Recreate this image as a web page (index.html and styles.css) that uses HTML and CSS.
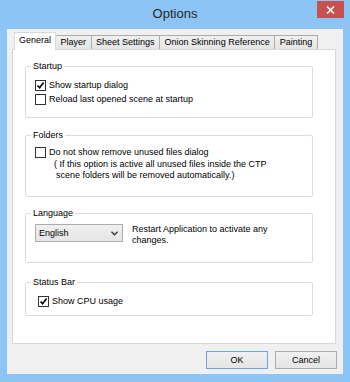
FILE: index.html
```html
<!DOCTYPE html>
<html lang="en">
<head>
    <meta charset="UTF-8">
    <title>Options</title>
    <link rel="stylesheet" href="styles.css">
</head>
<body>
    <div class="window">
        <div class="titlebar">
            <span class="title">Options</span>
            <span class="close">
                <svg width="9" height="8" viewBox="0 0 9 8"><path d="M1 0.5 L8 7.5 M8 0.5 L1 7.5" stroke="#fff" stroke-width="1.6" fill="none"/></svg>
            </span>
        </div>

        <div class="client">
            <div class="tabs">
                <div class="tab active">General</div>
                <div class="tab">Player</div>
                <div class="tab">Sheet Settings</div>
                <div class="tab">Onion Skinning Reference</div>
                <div class="tab">Painting</div>
            </div>

            <div class="panel">
                <fieldset class="group startup">
                    <legend>Startup</legend>
                    <div class="check-row">
                        <span class="box"><svg width="9" height="9" viewBox="0 0 9 9"><path d="M1.5 4.5 L3.6 6.8 L7.6 1.6" stroke="#000" stroke-width="1.6" fill="none"/></svg></span>
                        Show startup dialog
                    </div>
                    <div class="check-row">
                        <span class="box"></span>
                        Reload last opened scene at startup
                    </div>
                </fieldset>

                <fieldset class="group folders">
                    <legend>Folders</legend>
                    <div class="check-row">
                        <span class="box"></span>
                        Do not show remove unused files dialog
                    </div>
                    <div class="note">( If this option is active all unused files inside the CTP</div>
                    <div class="note second">scene folders will be removed automatically.)</div>
                </fieldset>

                <fieldset class="group language">
                    <legend>Language</legend>
                    <div class="lang-row">
                        <div class="select">
                            <span>English</span>
                            <svg width="7" height="5" viewBox="0 0 7 5"><path d="M0.5 0.8 L3.5 3.8 L6.5 0.8" stroke="#333" stroke-width="1.3" fill="none"/></svg>
                        </div>
                        <div class="lang-hint">Restart Application to activate any<br>changes.</div>
                    </div>
                </fieldset>

                <fieldset class="group status">
                    <legend>Status Bar</legend>
                    <div class="check-row">
                        <span class="box"><svg width="9" height="9" viewBox="0 0 9 9"><path d="M1.5 4.5 L3.6 6.8 L7.6 1.6" stroke="#000" stroke-width="1.6" fill="none"/></svg></span>
                        Show CPU usage
                    </div>
                </fieldset>
            </div>

            <div class="buttons">
                <button class="btn default">OK</button>
                <button class="btn">Cancel</button>
            </div>
        </div>
    </div>
</body>
</html>
```

FILE: styles.css
```css
body {
    margin: 0;
    background-color: #8cc5f5;
    font-family: "Liberation Sans", Arial, sans-serif;
    font-size: 9px;
    color: #000;
}
.window {
    width: 350px;
    height: 382px;
}
.titlebar {
    height: 29px;
    display: grid;
    grid-template-columns: 1fr auto 1fr;
}
.title {
    grid-column: 2;
    font-size: 13px;
    line-height: 27px;
    color: #262626;
}
.close {
    grid-column: 3;
    justify-self: end;
    width: 27px;
    height: 17px;
    margin: 1px 6px 0 0;
    background-color: #c75050;
    display: flex;
    align-items: center;
    justify-content: center;
}
.client {
    margin-left: 7px;
    width: 336px;
    height: 345px;
    box-sizing: border-box;
    padding: 3px 7px 0 5px;
    background-color: #f0f0f0;
}
.tabs {
    display: flex;
    align-items: flex-end;
    height: 17px;
    padding-left: 2px;
}
.tab {
    height: 13px;
    line-height: 13px;
    padding: 0 4.5px;
    border: 1px solid #acacac;
    border-bottom: none;
    margin-left: -1px;
    background: linear-gradient(#f0f0f0, #e5e5e5);
}
.tab.active {
    height: 17px;
    line-height: 15px;
    padding: 0 4px;
    margin-left: 0;
    margin-bottom: -1px;
    border-color: #d9d9d9;
    background: #fff;
    position: relative;
    z-index: 1;
}
.tab.active + .tab {
    border-left: none;
    margin-left: 0;
}
.panel {
    height: 295px;
    box-sizing: border-box;
    border: 1px solid #d9d9d9;
    background-color: #fff;
    padding: 11px 22px 0 12px;
}
.group {
    margin: 0;
    padding: 0 0 10px 5px;
    border: 1px solid #dcdcdc;
    border-radius: 2px;
}
.group legend {
    padding: 0 2px;
    line-height: 11px;
}
.check-row {
    display: flex;
    align-items: center;
    gap: 3px;
    height: 14px;
    margin-left: 4px;
}
.box {
    width: 9px;
    height: 9px;
    border: 1px solid #333;
    background-color: #fff;
    display: flex;
}
.startup {
    padding-top: 6px;
    padding-bottom: 11px;
}
.folders {
    margin-top: 12px;
    padding-top: 4px;
    padding-bottom: 15px;
}
.note {
    line-height: 11px;
    margin-left: 23px;
}
.note.second {
    margin-left: 25px;
}
.language {
    margin-top: 11px;
    padding-top: 5px;
    padding-bottom: 16px;
}
.lang-row {
    display: flex;
    gap: 9px;
    margin-left: 4px;
}
.select {
    width: 88px;
    height: 18px;
    box-sizing: border-box;
    border: 1px solid #acacac;
    background: linear-gradient(#f0f0f0, #e5e5e5);
    display: flex;
    align-items: center;
    justify-content: space-between;
    padding: 0 4px 0 3px;
}
.lang-hint {
    line-height: 11px;
}
.status {
    margin-top: 14px;
    padding-top: 6px;
    padding-bottom: 7px;
}
.status .check-row {
    margin-left: 7px;
}
.buttons {
    display: flex;
    justify-content: flex-end;
    gap: 7px;
    padding-top: 7px;
    margin-right: -1px;
}
.btn {
    width: 62px;
    height: 18px;
    box-sizing: border-box;
    border: 1px solid #acacac;
    background: linear-gradient(#f0f0f0, #e5e5e5);
    font-family: inherit;
    font-size: 9px;
    padding: 0;
    color: #000;
}
.btn.default {
    border-color: #68a5e8;
}
```
